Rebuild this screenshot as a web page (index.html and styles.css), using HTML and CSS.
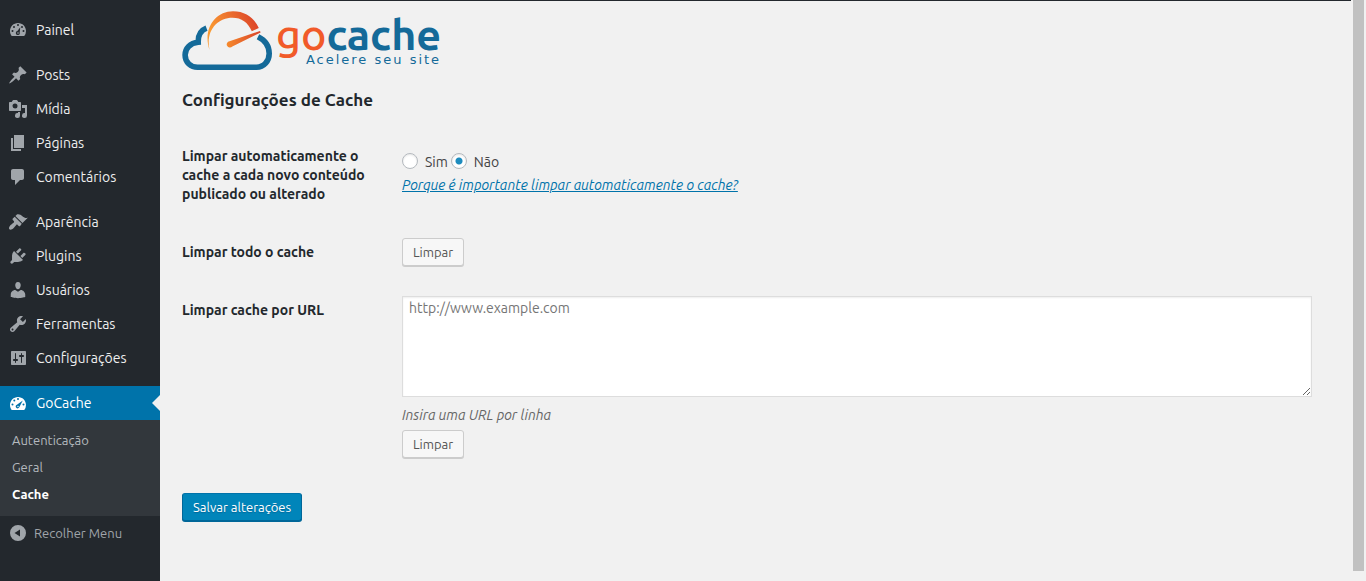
FILE: index.html
```html
<!DOCTYPE html>
<html lang="pt-BR">
<head>
<meta charset="utf-8">
<title>GoCache - Cache</title>
<link rel="stylesheet" href="styles.css">
</head>
<body>
<div class="layout">
  <nav class="sidebar" aria-label="Menu principal">
    <ul class="menu">
      <li><a class="menu-link" href="#"><svg class="icon" viewBox="0 0 20 20"><path fill-rule="evenodd" d="M3.76 16h12.48A7.96 7.96 0 0 0 18 11c0-4.42-3.58-8-8-8s-8 3.58-8 8c0 1.89.66 3.63 1.76 5zM10 4a1 1 0 1 1 0 2 1 1 0 0 1 0-2zM6 6a1 1 0 1 1 0 2 1 1 0 0 1 0-2zM14 6a1 1 0 1 1 0 2 1 1 0 0 1 0-2zM4.500 10a1 1 0 1 1 0 2 1 1 0 0 1 0-2zM15.500 10a1 1 0 1 1 0 2 1 1 0 0 1 0-2zM12.300 7.200l-.6 5.200a2 2 0 1 1-2.300-1.300zM10 12.200a.8.8 0 1 0 0 1.600.8.8 0 0 0 0-1.600z"/></svg>Painel</a></li>
    </ul>
    <ul class="menu">
      <li><a class="menu-link" href="#"><svg class="icon" viewBox="0 0 20 20"><path d="M10.440 3.020l1.820-1.820 6.360 6.350-1.830 1.820c-1.050-.68-2.480-.57-3.410.36l-.75.75c-.92.93-1.040 2.350-.35 3.410l-1.830 1.820-2.410-2.410-2.800 2.790c-.42.42-3.380 2.710-3.800 2.290s1.860-3.390 2.280-3.810l2.790-2.790L4.100 9.370l1.830-1.820c1.050.69 2.480.57 3.400-.36l.75-.75c.93-.92 1.050-2.350.36-3.420z"/></svg>Posts</a></li>
      <li><a class="menu-link" href="#"><svg class="icon" viewBox="0 0 20 20"><path fill-rule="evenodd" d="M13 11V4c0-.55-.45-1-1-1h-1.670L9.500 1.670C9.360 1.470 9 1 8.500 1h-3c-.5 0-.86.47-1 .67L3.670 3H2c-.55 0-1 .45-1 1v7c0 .55.45 1 1 1h10c.55 0 1-.45 1-1zM7 4.500a2.500 2.500 0 1 1 0 5 2.500 2.500 0 0 1 0-5zM14 6h5v10.500a2.500 2.500 0 1 1-2-2.450V9h-3zM10 14.050V13h2v3.500a2.500 2.500 0 1 1-2-2.450z"/></svg>Mídia</a></li>
      <li><a class="menu-link" href="#"><svg class="icon" viewBox="0 0 20 20"><path d="M6 15V2h10v13zM5 16h8v2H3V5h2z"/></svg>Páginas</a></li>
      <li><a class="menu-link" href="#"><svg class="icon" viewBox="0 0 20 20"><path d="M5 2h9c1.100 0 2 .9 2 2v7c0 1.100-.9 2-2 2h-2l-5 5v-5H5c-1.100 0-2-.9-2-2V4c0-1.100.9-2 2-2z"/></svg>Comentários</a></li>
    </ul>
    <ul class="menu">
      <li><a class="menu-link" href="#"><svg class="icon" viewBox="0 0 20 20"><path d="M14.480 11.060L7.410 3.990l1.500-1.500c.5-.56 2.300-.47 3.510.32 1.210.8 1.430 1.280 2.910 2.100 1.180.64 2.450 1.260 4.450.85zM13.770 11.770L6.700 4.700 4.780 6.610c-.38.39-.38 1.030 0 1.420l1.060 1.060c.39.39.39 1.030 0 1.420-.6.6-1.430 1.110-2.210 1.690-.35.26-.7.53-1.010.84C1.190 14.460.490 16.470 1.380 17.360s2.880.18 4.310-1.240c.31-.31.58-.66.85-1.010.57-.78 1.080-1.610 1.690-2.210.39-.39 1.030-.39 1.420 0l1.060 1.060c.38.38 1.030.38 1.420 0z"/></svg>Aparência</a></li>
      <li><a class="menu-link" href="#"><svg class="icon" viewBox="0 0 20 20"><path d="M13.110 4.360L9.870 7.600 8 5.730l3.240-3.240c.35-.34 1.050-.2 1.560.32.52.51.66 1.210.31 1.550zm-8 1.770l.91-1.120 9.010 9.010-1.190.84c-.71.71-2.630 1.160-3.820 1.160H6.140L4.900 17.260c-.59.59-1.540.59-2.120 0-.59-.58-.59-1.530 0-2.120l1.240-1.240v-3.880c0-1.130.4-3.190 1.090-3.890zm7.260 3.970l3.240-3.240c.34-.35 1.040-.21 1.550.31.52.51.66 1.210.31 1.550l-3.240 3.250z"/></svg>Plugins</a></li>
      <li><a class="menu-link" href="#"><svg class="icon" viewBox="0 0 20 20"><path d="M10 9.250c-2.270 0-2.730-3.440-2.730-3.440C7 4.020 7.820 2 9.970 2c2.160 0 2.980 2.020 2.710 3.810 0 0-.41 3.440-2.680 3.440zm0 2.570L12.720 10c2.390 0 4.520 2.330 4.520 4.530v2.490s-3.650 1.130-7.240 1.130c-3.650 0-7.240-1.130-7.240-1.130v-2.490c0-2.250 1.940-4.480 4.470-4.480z"/></svg>Usuários</a></li>
      <li><a class="menu-link" href="#"><svg class="icon" viewBox="0 0 20 20"><path fill-rule="evenodd" d="M16.680 9.770c-1.340 1.340-3.300 1.670-4.950.99l-5.410 6.520c-.99.99-2.590.99-3.580 0s-.99-2.590 0-3.570l6.520-5.420c-.68-1.650-.35-3.610.99-4.950 1.280-1.280 3.120-1.620 4.720-1.060l-2.890 2.890 2.820 2.820 2.860-2.870c.53 1.580.18 3.390-1.080 4.650zM3.810 16.210c.4.39 1.040.39 1.430 0 .4-.4.4-1.040 0-1.430-.39-.4-1.030-.4-1.430 0-.39.39-.39 1.030 0 1.430z"/></svg>Ferramentas</a></li>
      <li><a class="menu-link" href="#"><svg class="icon" viewBox="0 0 20 20"><path fill-rule="evenodd" d="M18 16V4c0-.55-.45-1-1-1H4c-.55 0-1 .45-1 1v12c0 .55.45 1 1 1h13c.55 0 1-.45 1-1zM8 11h1c.55 0 1 .45 1 1s-.45 1-1 1H8v1.500c0 .28-.22.5-.5.5s-.5-.22-.5-.5V13H6c-.55 0-1-.45-1-1s.45-1 1-1h1V5.500c0-.28.22-.5.5-.5s.5.22.5.5V11zm5-2h-1c-.55 0-1-.45-1-1s.45-1 1-1h1V5.500c0-.28.22-.5.5-.5s.5.22.5.5V7h1c.55 0 1 .45 1 1s-.45 1-1 1h-1v5.500c0 .28-.22.5-.5.5s-.5-.22-.5-.5V9z"/></svg>Configurações</a></li>
    </ul>
    <ul class="menu menu-current">
      <li>
        <a class="menu-link current" href="#"><svg class="icon" viewBox="0 0 20 20"><path fill-rule="evenodd" d="M3.760 17h12.480A7.960 7.960 0 0 0 18 12c0-4.420-3.580-8-8-8s-8 3.580-8 8c0 1.890.66 3.630 1.760 5zM10 5a1 1 0 1 1 0 2 1 1 0 0 1 0-2zM6.300 6.500a1 1 0 1 1 0 2 1 1 0 0 1 0-2zM4.500 10.500a1 1 0 1 1 0 2 1 1 0 0 1 0-2zM15.500 10.500a1 1 0 1 1 0 2 1 1 0 0 1 0-2zM14.800 7.400l-3.400 6.600a1.900 1.900 0 1 1-2.500-2.300zM10 12.800a.7.7 0 1 0 0 1.400.7.7 0 0 0 0-1.400z"/></svg>GoCache</a>
        <ul class="submenu">
          <li><a href="#">Autenticação</a></li>
          <li><a href="#">Geral</a></li>
          <li><a class="selected" href="#" aria-current="page">Cache</a></li>
        </ul>
      </li>
    </ul>
    <button class="collapse" type="button"><svg class="icon" viewBox="0 0 20 20"><path fill-rule="evenodd" d="M10 2a8 8 0 1 1 0 16 8 8 0 0 1 0-16zM12 6.500L6.500 10l5.500 3.500z"/></svg>Recolher Menu</button>
  </nav>

  <main class="content">
    <div class="logo">
      <svg class="logo-mark" viewBox="182 10 91 62" aria-hidden="true">
        <defs>
          <linearGradient id="dial" x1="0" x2="1" y1="0.300" y2="0"><stop offset="0" stop-color="#fa9a32"/><stop offset="1" stop-color="#d93a27"/></linearGradient>
          <linearGradient id="needle" x1="0" x2="1" y1="0" y2="0"><stop offset="0" stop-color="#f68a2c"/><stop offset="1" stop-color="#d9432a"/></linearGradient>
        </defs>
        <path fill="none" stroke="#146a99" stroke-width="5.600" d="M206.500 28.200C200.500 30.500 198 36 198.200 42.300C190 43 185.100 48.500 185.100 55C185.100 62.500 191 67.300 197.500 67.300H256.500C264 67.300 269.200 61 269.200 53.500C269.200 46 265 40.200 258 36.700"/>
        <path fill="url(#dial)" d="M209.500 50C202.500 29 215 11.200 233 11.200C246 11.200 254.500 18.500 258.800 28L251.800 31.300C248 22.500 241.500 17.800 232.500 17.800C217 17.800 205.500 31 209.500 50z"/>
        <path fill="url(#needle)" d="M260 31L229.500 41.200A3.200 3.200 0 1 0 232.300 46.500L260.600 32.600z"/>
      </svg>
      <div class="logo-text">
        <span class="wordmark"><span class="go">go</span><span class="cache">cache</span></span>
        <span class="tagline">Acelere seu site</span>
      </div>
    </div>
    <h1>Configurações de Cache</h1>
    <form class="settings">
      <div class="row" role="radiogroup" aria-labelledby="auto-label">
        <div class="row-label" id="auto-label">Limpar automaticamente o cache a cada novo conteúdo publicado ou alterado</div>
        <div class="row-field">
          <div class="radios">
            <label><input type="radio" name="auto" value="1">Sim</label>
            <label><input type="radio" name="auto" value="0" checked>Não</label>
          </div>
          <a class="help" href="#">Porque é importante limpar automaticamente o cache?</a>
        </div>
      </div>
      <div class="row">
        <div class="row-label" id="all-label">Limpar todo o cache</div>
        <div class="row-field"><button class="button" type="button" aria-describedby="all-label">Limpar</button></div>
      </div>
      <div class="row">
        <label class="row-label" for="urls">Limpar cache por URL</label>
        <div class="row-field">
          <textarea id="urls" placeholder="http://www.example.com" aria-describedby="urls-hint"></textarea>
          <p class="hint" id="urls-hint">Insira uma URL por linha</p>
          <button class="button" type="button">Limpar</button>
        </div>
      </div>
      <button class="button primary" type="submit">Salvar alterações</button>
    </form>
  </main>
  <div class="scroll-track" aria-hidden="true"><div class="scroll-thumb"></div></div>
</div>
</body>
</html>
```
FILE: styles.css
```css
* {
  box-sizing: border-box;
}

body {
  margin: 0;
  background: #f1f1f1;
  color: #444;
  font-family: Ubuntu, "Noto Sans", sans-serif;
  font-size: 14px;
  line-height: 19px;
}

ul {
  list-style: none;
  margin: 0;
  padding: 0;
}

.layout {
  display: flex;
  min-height: 100vh;
}

/* Sidebar */
.sidebar {
  flex: 0 0 160px;
  padding-top: 13px;
  background: #23282d;
}

.menu {
  margin-bottom: 11px;
}

.menu-current {
  margin-bottom: 0;
}

.menu-link {
  display: flex;
  align-items: center;
  gap: 8px;
  height: 34px;
  padding-left: 8px;
  color: #eee;
  text-decoration: none;
}

.icon {
  flex: none;
  width: 20px;
  height: 20px;
  fill: #a0a5aa;
}

.current {
  position: relative;
  background: #0073aa;
  color: #fff;
}

.current .icon {
  fill: #fff;
}

.current::after {
  content: "";
  position: absolute;
  right: 0;
  top: 9px;
  border: 8px solid transparent;
  border-left-width: 0;
  border-right-color: #f1f1f1;
}

.submenu {
  padding: 7px 0 8px;
  background: #32373c;
}

.submenu a {
  display: block;
  padding: 4px 12px;
  color: #b4b9be;
  font-size: 13px;
  text-decoration: none;
}

.submenu .selected {
  color: #fff;
  font-weight: 700;
}

.collapse {
  display: flex;
  align-items: center;
  gap: 6px;
  width: 100%;
  height: 34px;
  padding: 0 8px;
  border: 0;
  background: none;
  color: #a0a5aa;
  font: inherit;
  font-size: 13px;
}

/* Content */
.content {
  flex: 1;
  min-width: 0;
  padding: 9px 20px 0 22px;
  border-top: 1px solid #23282d;
}

.logo {
  display: flex;
  gap: 3px;
  height: 62px;
}

.logo-mark {
  flex: none;
  width: 91px;
  height: 62px;
}

.logo-text {
  display: flex;
  flex-direction: column;
  align-items: flex-end;
  padding-top: 1px;
}

.wordmark {
  font-size: 43px;
  line-height: 46px;
}

.go {
  color: #f15a29;
  font-weight: 500;
}

.cache {
  color: #146a99;
  font-weight: 700;
}

.tagline {
  color: #146a99;
  font-family: "DejaVu Sans", sans-serif;
  font-size: 13px;
  line-height: 6px;
  letter-spacing: 2px;
}

h1 {
  margin: 18px 0 17px;
  color: #23282d;
  font-size: 17px;
  line-height: 20px;
}

.row {
  display: flex;
}

.row-label {
  flex: 0 0 210px;
  padding: 20px 20px 19px 0;
  color: #23282d;
  font-weight: 700;
}

.row-field {
  flex: 1;
  min-width: 0;
  padding: 15px 10px;
}

.radios {
  display: flex;
  gap: 3px;
  padding-top: 11px;
  margin-bottom: 4px;
}

.radios label {
  display: flex;
  align-items: center;
  gap: 7px;
}

.radios input {
  appearance: none;
  width: 16px;
  height: 16px;
  margin: 0 0 3px;
  border: 1px solid #b4b9be;
  border-radius: 50%;
  background: #fff;
  box-shadow: inset 0 1px 2px rgba(0, 0, 0, 0.1);
}

.radios input:checked {
  background: radial-gradient(circle, #1e8cbe 0 3px, #fff 4px);
}

.help {
  color: #0073aa;
  font-style: italic;
}

.button {
  display: block;
  height: 28px;
  padding: 0 10px;
  border: 1px solid #ccc;
  border-radius: 3px;
  background: #f7f7f7;
  box-shadow: 0 1px 0 #ccc;
  color: #555;
  font: inherit;
  font-size: 13px;
}

.primary {
  margin-top: 20px;
  border-color: #0073aa #006799 #006799;
  background: #0085ba;
  box-shadow: 0 1px 0 #006799;
  color: #fff;
  text-shadow: 0 1px 1px #006799;
}

textarea {
  display: block;
  width: 99%;
  height: 101px;
  padding: 2px 6px;
  border: 1px solid #ddd;
  background: #fff;
  box-shadow: inset 0 1px 2px rgba(0, 0, 0, 0.07);
  color: #32373c;
  font: inherit;
  resize: vertical;
}

textarea::placeholder {
  color: #757575;
}

.hint {
  margin: 9px 0 5px;
  color: #666;
  font-style: italic;
}

.scroll-track {
  flex: 0 0 15px;
  padding: 0 2px 10px;
}

.scroll-thumb {
  height: 100%;
  background: #c1c1c1;
}
```
